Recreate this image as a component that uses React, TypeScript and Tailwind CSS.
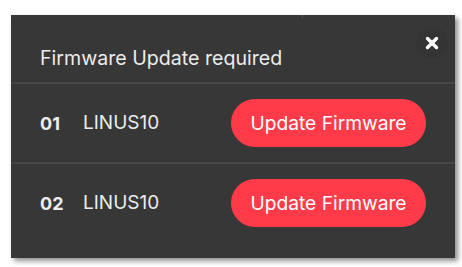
import React from "react";

function CloseIcon() {
  return (
    <svg width="14" height="14" viewBox="0 0 14 14">
      <path d="M2.5 2.5 L11.5 11.5 M11.5 2.5 L2.5 11.5" stroke="#ffffff" strokeWidth="3.4" strokeLinecap="round" />
    </svg>
  );
}

function Row({ n, name }: { n: string; name: string }) {
  return (
    <div className="flex h-[78px] items-center pl-[29px] pr-[29px]">
      <span className="w-[43px] text-[18px] font-bold text-[#ececec]">{n}</span>
      <span className="text-[19px] text-[#ececec]">{name}</span>
      <button className="ml-auto flex h-[48px] w-[195px] items-center justify-center rounded-full bg-[#ff3b4a] text-[19.2px] text-white">
        Update Firmware
      </button>
    </div>
  );
}

export default function App() {
  return (
    <div
      className="h-[267px] w-[462px] bg-white pl-[11px] pt-[15px]"
      style={{ fontFamily: "Inter, 'Open Sans', sans-serif" }}
    >
      <div className="relative h-[243px] w-[444px] bg-[#373737] shadow-[3px_3px_5px_rgba(0,0,0,0.45)]">
        <div className="absolute left-[291px] top-0 h-[3px] w-px bg-[#555]" />
        <div className="flex h-[67px] items-end pb-[9px] pl-[29px] text-[19.6px] text-[#ececec]">
          Firmware Update required
        </div>
        <button className="absolute right-[7px] top-[12px] flex h-[32px] w-[32px] items-center justify-center rounded-full bg-[#343434]">
          <CloseIcon />
        </button>
        <div className="h-[2px] bg-[#474747]" />
        <Row n="01" name="LINUS10" />
        <div className="h-[2px] bg-[#474747]" />
        <Row n="02" name="LINUS10" />
      </div>
    </div>
  );
}
